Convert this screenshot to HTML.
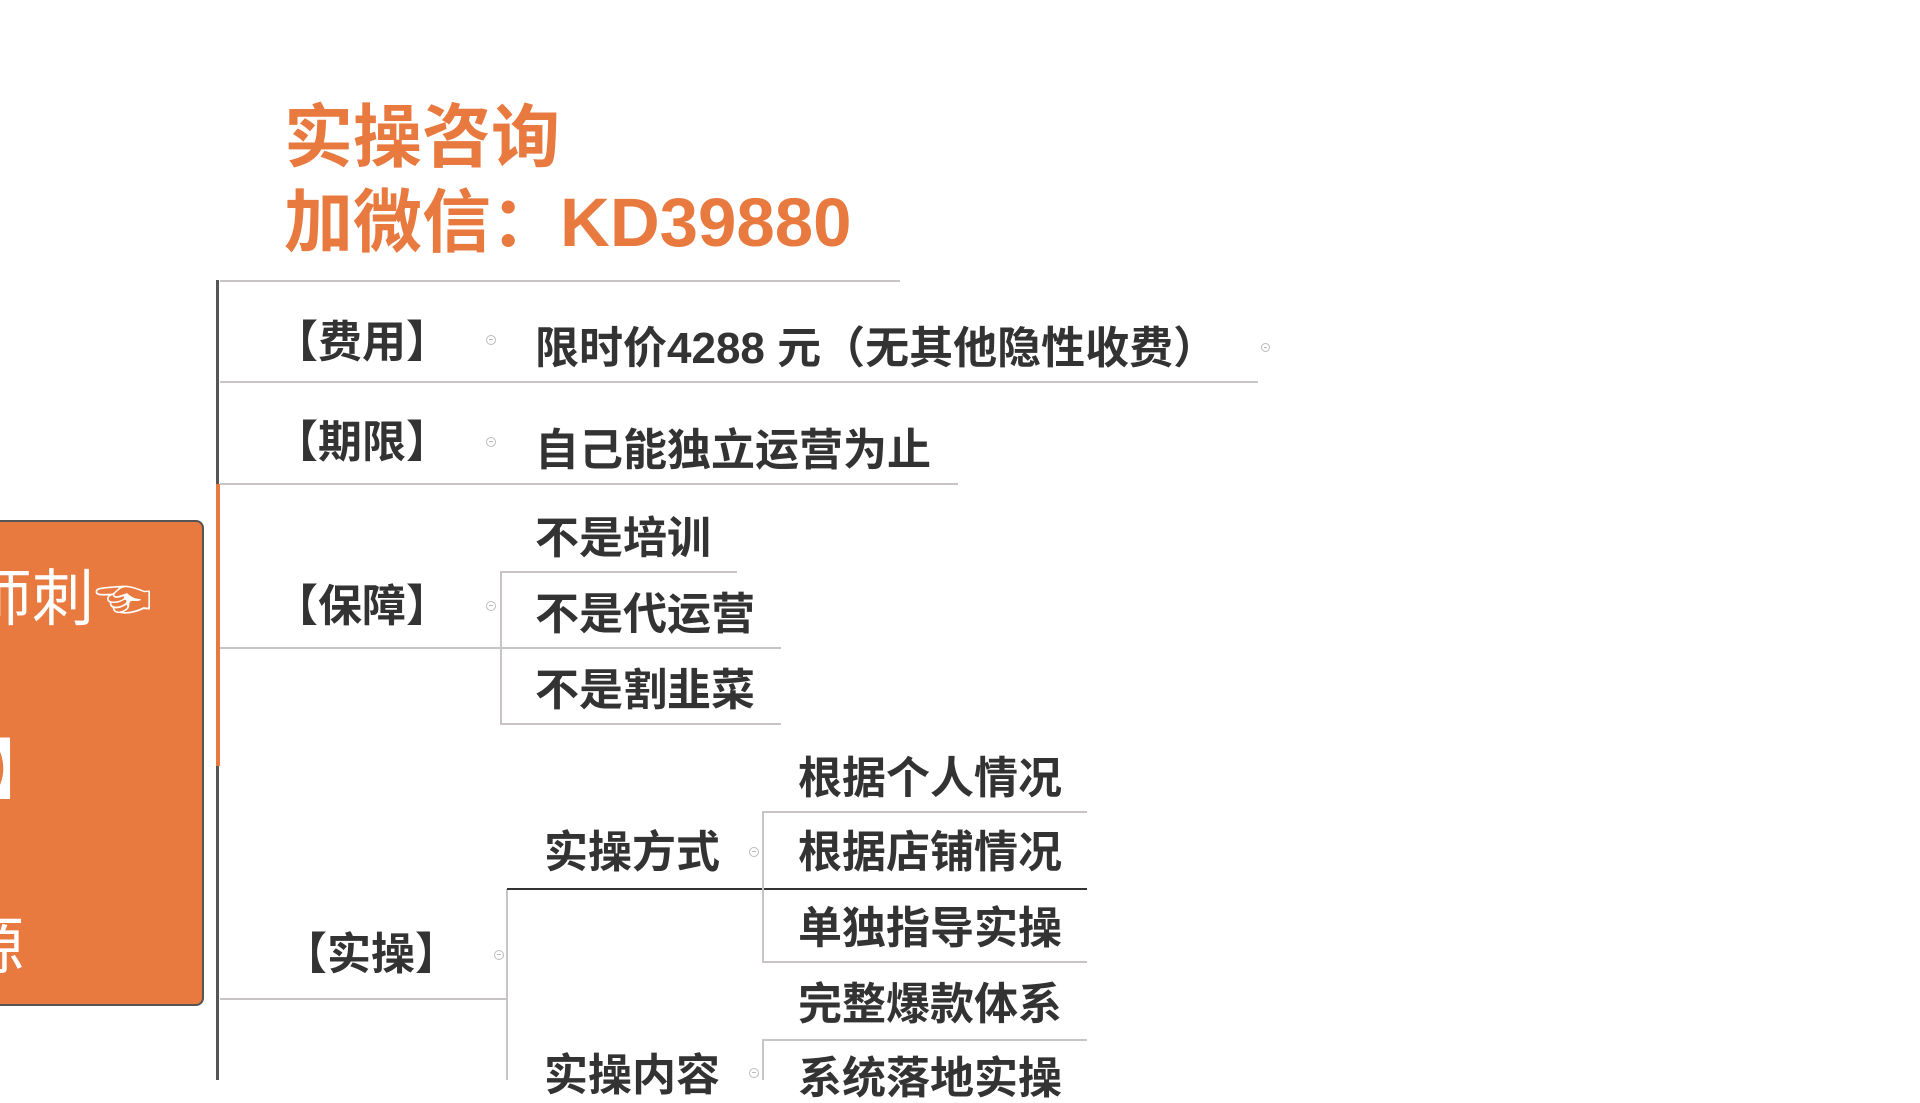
<!DOCTYPE html>
<html><head><meta charset="utf-8"><style>
body{margin:0;width:1920px;height:1080px;overflow:hidden;background:#fff;position:relative;font-family:"Liberation Sans","Noto Sans CJK SC",sans-serif;}
.t{position:absolute;white-space:nowrap;line-height:1;font-weight:bold;color:#333;font-size:44px;}
.h{position:absolute;height:2px;background:#c9c4c4;}
.v{position:absolute;width:2px;background:#c9c4c4;}
.c{position:absolute;width:10px;height:10px;border:1.5px solid #bbb;border-radius:50%;box-sizing:border-box;}
.c:after{content:"";position:absolute;left:2px;right:2px;top:3px;height:1px;background:#bbb;}
.o{color:#E8793F;font-size:69px;}
</style></head><body>
<div class="t o" style="left:284px;top:103px;">实操咨询</div>
<div class="t o" style="left:284px;top:188px;">加微信：KD39880</div>

<div class="h" style="left:220px;top:280px;width:680px;"></div>
<div style="position:absolute;left:216px;top:280px;width:3px;height:800px;background:#555;"></div>
<div style="position:absolute;left:216px;top:484px;width:4px;height:282px;background:#E8793F;"></div>

<div class="t" style="left:274px;top:321px;">【费用】</div>
<div class="c" style="left:486px;top:335px;"></div>
<div class="t" style="left:535px;top:327px;">限时价4288 元（无其他隐性收费）</div>
<div class="h" style="left:220px;top:381px;width:1038px;"></div>
<div class="c" style="left:1261px;top:343px;width:9px;height:9px;"></div>

<div class="t" style="left:274px;top:421px;">【期限】</div>
<div class="c" style="left:486px;top:437px;"></div>
<div class="t" style="left:535px;top:429px;">自己能独立运营为止</div>
<div class="h" style="left:220px;top:483px;width:738px;"></div>

<div class="t" style="left:274px;top:585px;">【保障】</div>
<div class="c" style="left:486px;top:601px;"></div>
<div class="v" style="left:500px;top:572px;height:152px;"></div>
<div class="t" style="left:535px;top:517px;">不是培训</div>
<div class="h" style="left:500px;top:571px;width:237px;"></div>
<div class="t" style="left:535px;top:593px;">不是代运营</div>
<div class="h" style="left:220px;top:647px;width:561px;"></div>
<div class="t" style="left:535px;top:669px;">不是割韭菜</div>
<div class="h" style="left:500px;top:723px;width:281px;"></div>

<div class="t" style="left:283px;top:933px;">【实操】</div>
<div class="c" style="left:494px;top:950px;"></div>
<div class="h" style="left:220px;top:998px;width:287px;"></div>
<div class="v" style="left:506px;top:889px;height:191px;"></div>
<div class="t" style="left:544px;top:831px;">实操方式</div>
<div class="h" style="left:507px;top:888px;width:580px;background:#333;height:2px;"></div>
<div class="c" style="left:749px;top:847px;"></div>
<div class="v" style="left:762px;top:812px;height:150px;"></div>
<div class="t" style="left:798px;top:757px;">根据个人情况</div>
<div class="h" style="left:762px;top:811px;width:325px;"></div>
<div class="t" style="left:798px;top:831px;">根据店铺情况</div>
<div class="t" style="left:798px;top:907px;">单独指导实操</div>
<div class="h" style="left:762px;top:961px;width:325px;"></div>
<div class="t" style="left:798px;top:983px;">完整爆款体系</div>
<div class="h" style="left:762px;top:1039px;width:325px;"></div>
<div class="v" style="left:762px;top:1040px;height:40px;"></div>
<div class="t" style="left:798px;top:1057px;">系统落地实操</div>
<div class="t" style="left:544px;top:1054px;">实操内容</div>
<div class="c" style="left:749px;top:1068px;"></div>

<div style="position:absolute;left:-10px;top:520px;width:214px;height:486px;background:#E8793F;border:2px solid #555;border-radius:8px;box-sizing:border-box;overflow:hidden;">
<div style="position:absolute;left:-22px;top:40px;color:#fff;font-size:62px;line-height:1;font-family:'Noto Sans CJK SC',sans-serif;white-space:nowrap;">师刺<span style="font-size:58px;">☜</span></div>
<div style="position:absolute;left:-4px;top:210px;color:#fff;font-size:66px;line-height:1;font-family:'Noto Sans CJK SC',sans-serif;">】</div>
<div style="position:absolute;left:-30px;top:388px;color:#fff;font-size:62px;line-height:1;font-family:'Noto Sans CJK SC',sans-serif;">源</div>
</div>
</body></html>
